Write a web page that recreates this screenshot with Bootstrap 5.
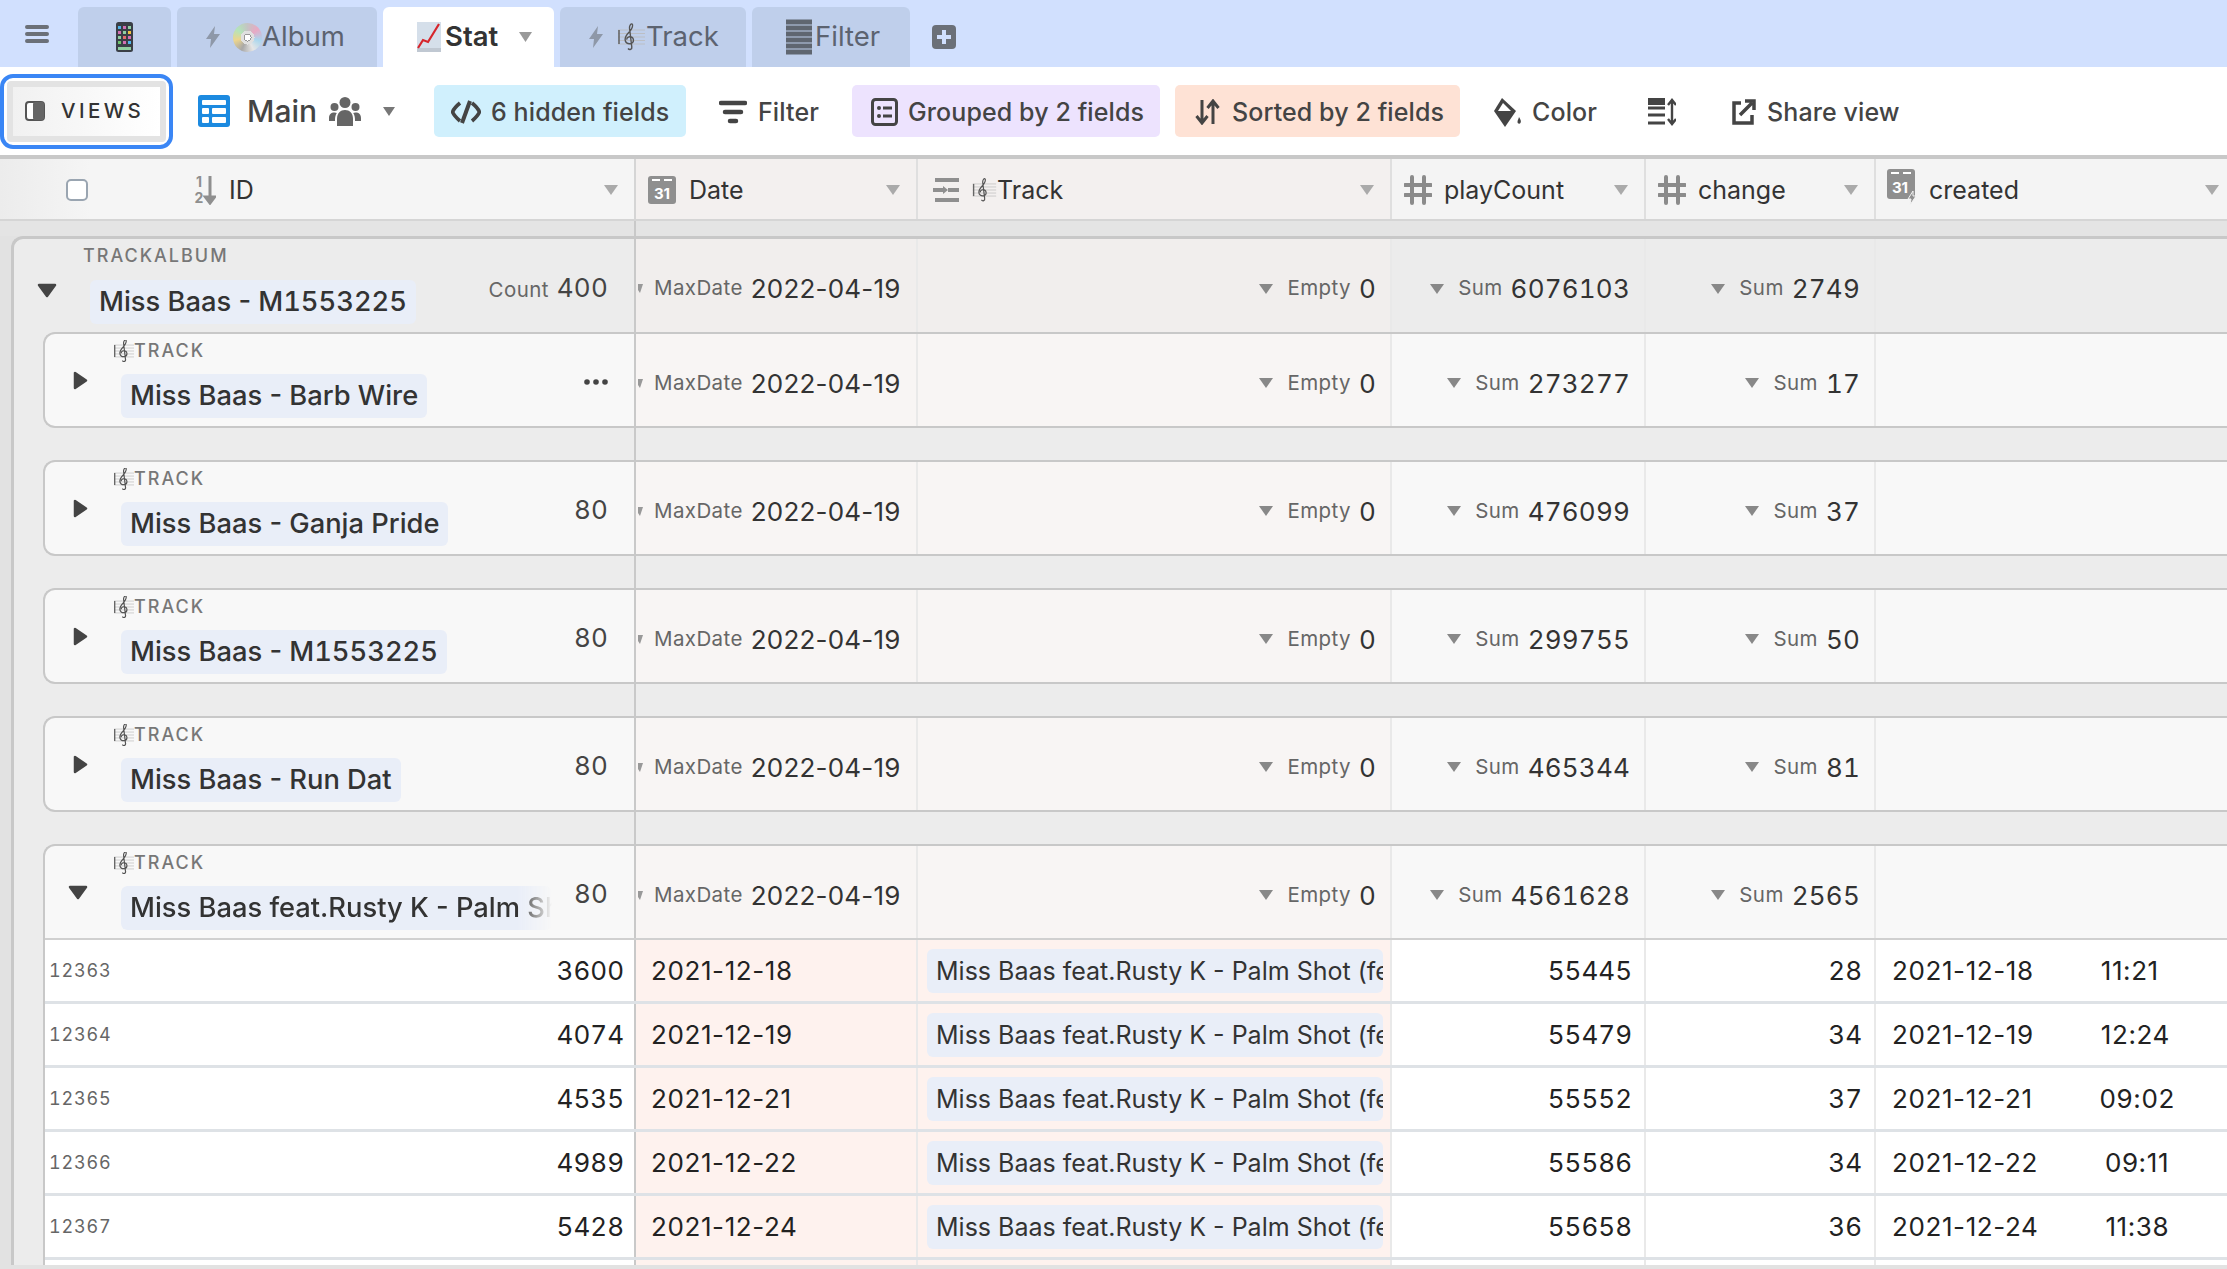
<!DOCTYPE html>
<html lang="en"><head><meta charset="utf-8"><title>Stat</title>
<link rel="stylesheet" href="https://cdn.jsdelivr.net/npm/bootstrap@5.3.0/dist/css/bootstrap.min.css">
<style>
html,body{height:100%;overflow:hidden;background:#e2e2e2;font-family:Inter,"Liberation Sans",sans-serif;color:#333}
.topbar{height:67px;background:#d1e0fe;padding-left:25px}
.burger{width:24px;margin-right:29px;color:#6b7078}
.tabx{height:60px;margin-top:7px;margin-right:6px;background:#bfcfeb;border-radius:6px 6px 0 0;color:#5c6370;font-size:27.5px;line-height:1}
.tabx svg{flex:none}
.tabx.on{background:#fff;color:#333;font-weight:600;margin-right:6px}
.t-phone{width:93px}.t-album{width:200px;padding-left:28px}.t-stat{width:171px;padding-left:34px}.t-track{width:186px;padding-left:28px}.t-filter{width:158px;padding-left:34px}
.plus{margin-left:16px;margin-top:7px;color:#6b7078}
.cdx{flex:none;width:29px;height:29px;border-radius:50%;background:radial-gradient(circle,#fff 0 3px,#999 3px 4px,#e0e0e0 4px 7px,transparent 7px),conic-gradient(#c4c4c4,#e9a9c4,#a9d6ee,#e6e6e6,#a8a8a8,#ecd58e,#b4e4ba,#c4c4c4);margin-left:12px}
.scorex{margin-left:12px}
.toolbar{height:88px;background:#fff;border-bottom:0}
.viewsx{width:173px;height:75px;border:4px solid #3a86f5;border-radius:13px;background:#fff;padding:3px;flex:none}
.viewsin{height:100%;border:6px solid #e3e3e3;border-radius:4px;background:linear-gradient(90deg,#f1f1f1,#fff);padding-left:12px;font-size:20.5px;font-weight:500;letter-spacing:3.4px;color:#333}
.mainx{margin-left:25px;font-size:30px;font-weight:500;color:#444;width:207px}
.toolx{height:52px;border:0;border-radius:5px;font-size:25px;font-weight:500;color:#444;padding:2px 0 0;line-height:1;letter-spacing:.1px}
.toolx:hover{color:#444}
.p-hid{width:252px;background:#d0f0fd;margin-left:29px;padding-left:17px}
.p-fil{width:166px;justify-content:center}
.p-grp{width:308px;background:#ede3fe;padding-left:19px}
.p-srt{width:285px;background:#fee2d5;margin-left:15px;padding-left:20px}
.p-col{margin-left:33px;width:155px}
.p-row{width:28px}
.p-shr{margin-left:55px}
.sheetx{border-top:4px solid #c8c8c8;height:1110px;overflow:hidden}
.cellx{flex:none;display:flex;align-items:center;overflow:hidden;height:100%;border-right:2px solid #e9e9e9;white-space:nowrap}
.c-i{width:636px;border-right:2px solid #c9c9c9}
.c-d{width:282px}.c-t{width:474px}.c-p{width:254px}.c-c{width:230px}.c-n{flex:1 0 0;border-right:0}
.hrow{height:62px;border-bottom:2px solid #d5d5d5;background:#f4f4f4;font-size:25px;color:#333;line-height:1}
.hrow .cellx{padding-top:2px;border-right-color:#dfdfdf}
.hrow .c-i{background:linear-gradient(90deg,#ececec,#f5f5f5 90px);padding-left:66px;border-right-color:#d5d5d5}
.hrow .c-d,.hrow .c-t{background:#f3f0ef}
.hrow .form-check-input{width:22px;height:22px;margin:0 106px 0 0;border:2px solid #9aa5b1;border-radius:5px;flex:none}
.careth{margin-left:auto;margin-right:16px;flex:none}
.bandx{height:15px;background:#e4e4e4}
.bandx .c-i{height:100%;background:#e4e4e4}
.albumx{margin-left:11px;border-left:3px solid #c8c8c8;border-top:3px solid #c8c8c8;border-top-left-radius:12px;background:#ececec}
.arow{height:93px}
.arow .c-i{width:622px}
.arow .c-d,.arow .c-t{background:#f1eeed}
.arow .cellx{padding-top:6px}
.arow .c-i{padding-top:0;border-right-color:#c9c9c9}
.trkx{margin-left:29px;border:2px solid #c8c8c8;border-width:2px 0 2px 2px;border-radius:12px 0 0 12px;background:#f8f8f8}
.trkx.openx{border-width:2px 0 0 2px;border-radius:12px 0 0 0}
.trow{height:92px}
.openx .trow{height:94px;border-bottom:2px solid #d0d0d0}
.trow .c-i{width:591px;border-right-color:#c9c9c9}
.trow .c-d,.trow .c-t{background:#f8f5f4}
.trow .cellx:not(.c-i){padding-top:6px}
.spacerx{height:32px}
.spacerx .c-i{width:622px;height:100%;background:transparent}
.tri{flex:none}
.blockx{flex:none;align-self:flex-start;min-width:0}
.lblx{height:22px;font-size:18px;font-weight:500;letter-spacing:2px;color:#777;line-height:22px;display:flex;align-items:center}
.pillx{display:inline-block;background:#e9eef8;border-radius:6px;height:44px;line-height:44px;padding:0 9px;margin-left:7px;font-size:27.3px;font-weight:500;color:#333;white-space:nowrap}
.fadex{width:431px;overflow:hidden;-webkit-mask-image:linear-gradient(90deg,#000 92%,transparent);mask-image:linear-gradient(90deg,#000 92%,transparent);vertical-align:top}
.a-blk{margin-left:26px;padding-top:6px}
.t-blk{margin-left:26px;padding-top:6px}
.t-blk .lblx{margin-bottom:12px}
.a-blk .lblx{margin-bottom:13px}
.countx{margin-left:auto;margin-right:26px;font-size:20.5px;color:#666;padding-top:3px;letter-spacing:.4px;flex:none}
.numx{font-size:26px;color:#444;margin-left:8px;letter-spacing:.2px}
.agg{justify-content:flex-end;font-size:20.5px;color:#666;letter-spacing:.4px;padding-right:14px}
.agg b{font-weight:400;font-size:26px;color:#333;margin-left:8px;letter-spacing:.2px}
.agg svg{margin-right:14px;flex:none}
.agl{justify-content:flex-start;padding-left:2px;padding-right:0}
.agl svg{margin-right:14px}
.rowx{height:64px;background:#fff;border-bottom:3px solid #dee2e6;font-size:26px;color:#222}
.rowx .c-i{width:591px;padding-left:4px;padding-right:10px;justify-content:space-between;border-right-color:#c9c9c9}
.rowx .c-d,.rowx .c-t{background:#fef2ee}
.idx{font-size:18px;color:#666;letter-spacing:.8px}
.rowx .c-d{padding-left:15px;letter-spacing:.6px}
.rowx .c-t{padding-left:9px}
.rowx .c-p,.rowx .c-c{justify-content:flex-end;padding-right:12px}
.rowx .c-n{padding-left:16px;letter-spacing:.6px}
.rowx .c-n span+span{margin-left:67px}
.recx{display:inline-block;background:#e9eef8;border-radius:6px;height:44px;line-height:44px;padding:0 9px;width:456px;font-size:25px;color:#333;white-space:nowrap;overflow:hidden}
.c-p b,.c-c b,.c-t b,.numx,.rowx .c-i,.rowx .c-p,.rowx .c-c,.digitsx{font-variant-numeric:tabular-nums}
</style></head><body>
<svg width="0" height="0" class="position-absolute"><defs>
<symbol id="score" viewBox="0 0 30 30"><path d="M2 8h27M2 11.500h27M2 15h27M2 18.500h27M2 22h27" stroke="#bbb" stroke-width=".8" fill="none"/><path d="M3 8v14" stroke="#666" stroke-width="1.600"/><path d="M12 26.500c1.500 1.800 4.200.8 3.800-1.500L13.500 6c-.2-2.500 1.500-4.500 2.600-4 1.200.7.200 4.500-2 7-2.500 2.800-5 5-5 8.500 0 3 2.500 4.500 5 4.200 2.500-.3 3.500-2.200 3.300-4-.2-2-2-3.200-3.800-3-2 .2-3 1.600-2.800 3" stroke="#555" stroke-width="1.400" fill="none"/></symbol>
<symbol id="bolt" viewBox="0 0 16 22"><path d="M10 0 1 13h5l-1 9 10-14H9z" fill="currentColor"/></symbol>
<symbol id="cal" viewBox="0 0 28 28"><rect width="28" height="28" rx="3" fill="#8f8f8f"/><path d="M4 4h8M16 4h8" stroke="#fff" stroke-width="2"/><text x="14" y="23" font-family="Inter,sans-serif" font-size="15" font-weight="700" fill="#fff" text-anchor="middle">31</text></symbol>
<symbol id="hash" viewBox="0 0 28 30"><path d="M8 2v26M20 2v26M1 10h26M1 20h26" stroke="#8b8b8b" stroke-width="4" stroke-linecap="round" fill="none"/></symbol>
</defs></svg>

<div class="topbar d-flex">
 <div class="burger d-flex align-items-center"><svg width="24" height="22" viewBox="0 0 24 22"><path d="M2 4h20M2 11h20M2 18h20" stroke="currentColor" stroke-width="4" stroke-linecap="round"/></svg></div>
 <div class="tabx t-phone d-flex align-items-center justify-content-center"><svg width="17" height="30" viewBox="0 0 17 30"><rect width="17" height="30" rx="2.500" fill="#3a3f46"/><g fill="#4fb5ea"><rect x="2" y="4" width="3" height="3"/><rect x="12" y="9" width="3" height="3" fill="#f0c040"/><rect x="7" y="14" width="3" height="3" fill="#e56a6a"/><rect x="2" y="19" width="3" height="3" fill="#6dc46d"/><rect x="12" y="19" width="3" height="3"/></g><g fill="#d26fb2"><rect x="7" y="4" width="3" height="3"/><rect x="2" y="9" width="3" height="3"/><rect x="12" y="14" width="3" height="3"/><rect x="7" y="19" width="3" height="3"/></g><g fill="#8fd0a0"><rect x="12" y="4" width="3" height="3"/><rect x="7" y="9" width="3" height="3"/><rect x="2" y="14" width="3" height="3"/><rect x="2" y="25" width="13" height="3"/></g></svg></div>
 <div class="tabx t-album d-flex align-items-center"><svg width="16" height="22" style="color:#8e98a8"><use href="#bolt"/></svg><div class="cdx"></div><span>Album</span></div>
 <div class="tabx on t-stat d-flex align-items-center"><svg width="24" height="30" viewBox="0 0 24 30"><rect width="24" height="30" fill="#d5dfea"/><rect y="26" width="24" height="4" fill="#c0c8d2"/><path d="M1 26l5-8 5 2L22 2" stroke="#d6262c" stroke-width="2.200" fill="none"/></svg><span class="ms-1">Stat</span><svg class="ms-auto" width="13" height="10" viewBox="0 0 13 10" style="margin-right:22px"><path d="M0 0h13L6.500 10z" fill="#999"/></svg></div>
 <div class="tabx t-track d-flex align-items-center"><svg width="16" height="22" style="color:#8e98a8"><use href="#bolt"/></svg><svg width="30" height="30" class="scorex"><use href="#score"/></svg><span>Track</span></div>
 <div class="tabx t-filter d-flex align-items-center"><svg width="26" height="36" viewBox="0 0 26 36" style="margin-right:3px"><path d="M0 3h26M0 9h26M0 15h26M0 21h26M0 27h26M0 33h26" stroke="#5f6670" stroke-width="5"/></svg><span>Filter</span></div>
 <div class="plus d-flex align-items-center"><svg width="24" height="24" viewBox="0 0 24 24"><rect width="24" height="24" rx="4" fill="currentColor"/><path d="M12 5v14M5 12h14" stroke="#d1e0fe" stroke-width="4"/></svg></div>
</div>

<div class="toolbar d-flex align-items-center">
 <div class="viewsx"><div class="viewsin d-flex align-items-center"><svg width="20" height="20" viewBox="0 0 20 20" style="margin-right:16px"><rect x="1" y="1" width="18" height="18" rx="3" fill="#fff" stroke="#555" stroke-width="2"/><rect x="8" y="1" width="11" height="18" rx="2" fill="#666"/></svg>VIEWS</div></div>
 <div class="mainx d-flex align-items-center"><svg width="32" height="32" viewBox="0 0 32 32"><rect width="32" height="32" rx="3" fill="#1c8ae0"/><g fill="#fff"><rect x="4" y="5" width="24" height="5" rx="1"/><rect x="4" y="13" width="7" height="6" rx="1"/><rect x="14" y="13" width="14" height="6" rx="1"/><rect x="4" y="22" width="7" height="6" rx="1"/><rect x="14" y="22" width="14" height="6" rx="1"/></g></svg>
  <span style="margin-left:17px;width:82px">Main</span><svg width="32" height="29" viewBox="0 0 32 29"><g fill="#666"><circle cx="16" cy="5.500" r="5.500"/><circle cx="5.500" cy="10" r="4"/><circle cx="26.500" cy="10" r="4"/><path d="M8 29v-7c0-6 3.500-9 8-9s8 3 8 9v7z"/><path d="M0 24v-3c0-3.500 2-5.500 5.500-5.500 1 0 1.800.2 2.300.5C6.500 18 6 20 6 23v1zM32 24v-3c0-3.500-2-5.500-5.500-5.500-1 0-1.800.2-2.300.5 1.300 2 1.800 4 1.800 7v1z"/></g></svg><svg width="12" height="9" viewBox="0 0 12 9" style="margin-left:22px"><path d="M0 0h12L6 9z" fill="#777"/></svg></div>
 <button class="btn toolx p-hid d-flex align-items-center"><svg width="30" height="24" viewBox="0 0 30 24" style="margin-right:10px"><path d="M9 3Q3 8 1.500 12 3 16 9 21M21 3q6 5 7.500 9-1.500 4-7.500 9" stroke="#444" stroke-width="3.600" fill="none"/><path d="M19 1 11 23" stroke="#444" stroke-width="4"/></svg>6 hidden fields</button>
 <button class="btn toolx p-fil d-flex align-items-center"><svg width="28" height="24" viewBox="0 0 28 24" style="margin-right:11px"><path d="M2 3h24M6 12h16M11 21h6" stroke="#444" stroke-width="4.500" stroke-linecap="round"/></svg>Filter</button>
 <button class="btn toolx p-grp d-flex align-items-center"><svg width="27" height="28" viewBox="0 0 27 28" style="margin-right:10px"><rect x="1.500" y="1.500" width="24" height="25" rx="3" fill="none" stroke="#444" stroke-width="3"/><circle cx="8" cy="10" r="2" fill="#444"/><circle cx="8" cy="18" r="2" fill="#444"/><path d="M12 10h9M12 18h9" stroke="#444" stroke-width="3"/></svg>Grouped by 2 fields</button>
 <button class="btn toolx p-srt d-flex align-items-center"><svg width="25" height="26" viewBox="0 0 25 26" style="margin-right:12px"><path d="M7 1v22M1.500 17 7 24l5.500-7M18 25V3M12.500 9 18 2l5.500 7" stroke="#444" stroke-width="3" fill="none"/></svg>Sorted by 2 fields</button>
 <button class="btn toolx p-col d-flex align-items-center"><svg width="29" height="31" viewBox="0 0 29 31" style="margin-right:10px"><path d="M9 1 1 14l11 16 11-16z" fill="#444"/><path d="M10 6l-5 8h13z" fill="#fff"/><path d="M26 20c1.500 2.500 2.500 4 1.500 6-1 1.200-3 .6-3-1 0-1.500 1-3 1.500-5z" fill="#444"/></svg>Color</button>
 <button class="btn toolx p-row d-flex align-items-center"><svg width="28" height="28" viewBox="0 0 28 28"><path d="M0 3h17M0 10h17M0 17h17M0 25h17" stroke="#444" stroke-width="3"/><rect y="0" width="17" height="7" fill="#444"/><path d="M24 3v22M20 7l4-5 4 5M20 21l4 5 4-5" stroke="#444" stroke-width="2.400" fill="none"/></svg></button>
 <button class="btn toolx p-shr d-flex align-items-center"><svg width="25" height="26" viewBox="0 0 25 26" style="margin-right:11px"><path d="M10 4H3v20h18v-8" stroke="#444" stroke-width="3.500" fill="none"/><path d="M9 16 21 4M14 2h9v9" stroke="#444" stroke-width="3.500" fill="none"/></svg>Share view</button>
</div>

<div class="sheetx">
 <div class="hrow d-flex">
  <div class="cellx c-i"><input class="form-check-input" type="checkbox" aria-label="select all"><svg width="22" height="30" viewBox="0 0 22 30" style="margin-right:13px"><text x="5" y="12" font-family="Inter,sans-serif" font-size="14" font-weight="700" fill="#8f8f8f" text-anchor="middle">1</text><text x="5" y="28" font-family="Inter,sans-serif" font-size="14" font-weight="700" fill="#8f8f8f" text-anchor="middle">2</text><path d="M16 1v25M11.500 22l4.500 6 4.500-6z" stroke="#8f8f8f" stroke-width="3" fill="#8f8f8f"/></svg>ID<svg class="careth" width="14" height="10" viewBox="0 0 14 10"><path d="M0 0h14L7 10z" fill="#aaa"/></svg></div>
  <div class="cellx c-d"><svg width="28" height="28" style="margin:0 13px 0 12px"><use href="#cal"/></svg>Date<svg class="careth" width="14" height="10" viewBox="0 0 14 10"><path d="M0 0h14L7 10z" fill="#aaa"/></svg></div>
  <div class="cellx c-t"><svg width="30" height="26" viewBox="0 0 30 26" style="margin:0 10px 0 13px"><path d="M4 3h24M2 13h11M17 13h11M4 23h24" stroke="#8f8f8f" stroke-width="4"/><path d="M12 9l5 4-5 4z" fill="#8f8f8f"/></svg><svg width="26" height="30" viewBox="0 0 28 30"><use href="#score"/></svg>Track<svg class="careth" width="14" height="10" viewBox="0 0 14 10"><path d="M0 0h14L7 10z" fill="#aaa"/></svg></div>
  <div class="cellx c-p"><svg width="28" height="30" style="margin:0 12px 0 12px"><use href="#hash"/></svg>playCount<svg class="careth" width="14" height="10" viewBox="0 0 14 10"><path d="M0 0h14L7 10z" fill="#aaa"/></svg></div>
  <div class="cellx c-c"><svg width="28" height="30" style="margin:0 12px 0 12px"><use href="#hash"/></svg>change<svg class="careth" width="14" height="10" viewBox="0 0 14 10"><path d="M0 0h14L7 10z" fill="#aaa"/></svg></div>
  <div class="cellx c-n"><svg width="30" height="36" viewBox="0 0 30 36" style="margin:-6px 12px 0 11px"><rect width="28" height="30" rx="3" fill="#8f8f8f"/><path d="M4 4h8M16 4h8" stroke="#fff" stroke-width="2"/><text x="13" y="24" font-family="Inter,sans-serif" font-size="15" font-weight="700" fill="#fff" text-anchor="middle">31</text><path d="M26 22l-5 8h3l-1 6 6-9h-3z" fill="#8f8f8f" stroke="#f4f4f4"/></svg>created<svg class="careth" style="margin-right:8px" width="14" height="10" viewBox="0 0 14 10"><path d="M0 0h14L7 10z" fill="#aaa"/></svg></div>
 </div>
 <div class="bandx d-flex"><div class="cellx c-i"></div></div>
 <div class="albumx">
  <div class="arow d-flex">
   <div class="cellx c-i"><svg class="tri" width="20" height="15" viewBox="0 0 20 15" style="margin:9px 0 0 23px"><path d="M2 2h16l-8 11z" fill="#444" stroke="#444" stroke-width="2.500" stroke-linejoin="round"/></svg><div class="blockx a-blk"><div class="lblx">TRACKALBUM</div><span class="pillx">Miss Baas - M<span class="digitsx">1553225</span></span></div><div class="countx">Count<span class="numx">400</span></div></div>
   <div class="cellx c-d agg agl"><svg width="5" height="9" viewBox="0 0 5 9" style="margin-right:11px"><path d="M0 0h5L2 9 0 6z" fill="#999"/></svg>MaxDate<b>2022-04-19</b></div>
   <div class="cellx c-t agg"><svg width="14" height="10" viewBox="0 0 14 10"><path d="M0 0h14L7 10z" fill="#888"/></svg>Empty<b>0</b></div>
   <div class="cellx c-p agg"><svg width="14" height="10" viewBox="0 0 14 10"><path d="M0 0h14L7 10z" fill="#888"/></svg>Sum<b>6076103</b></div>
   <div class="cellx c-c agg"><svg width="14" height="10" viewBox="0 0 14 10"><path d="M0 0h14L7 10z" fill="#888"/></svg>Sum<b>2749</b></div>
   <div class="cellx c-n"></div>
  </div>

  <div class="trkx"><div class="trow d-flex">
   <div class="cellx c-i"><svg class="tri" width="15" height="19" viewBox="0 0 15 19" style="margin:0 0 0 28px"><path d="M2 2v15l11-7.500z" fill="#444" stroke="#444" stroke-width="2.500" stroke-linejoin="round"/></svg><div class="blockx t-blk"><div class="lblx"><svg width="20" height="22" viewBox="3 2 22 26"><use href="#score" width="30" height="30"/></svg>TRACK</div><span class="pillx">Miss Baas - Barb Wire</span></div><div class="countx d-flex"><svg width="24" height="6" viewBox="0 0 24 6"><g fill="#444"><circle cx="3" cy="3" r="2.800"/><circle cx="12" cy="3" r="2.800"/><circle cx="21" cy="3" r="2.800"/></g></svg></div></div>
   <div class="cellx c-d agg agl"><svg width="5" height="9" viewBox="0 0 5 9" style="margin-right:11px"><path d="M0 0h5L2 9 0 6z" fill="#999"/></svg>MaxDate<b>2022-04-19</b></div>
   <div class="cellx c-t agg"><svg width="14" height="10" viewBox="0 0 14 10"><path d="M0 0h14L7 10z" fill="#888"/></svg>Empty<b>0</b></div>
   <div class="cellx c-p agg"><svg width="14" height="10" viewBox="0 0 14 10"><path d="M0 0h14L7 10z" fill="#888"/></svg>Sum<b>273277</b></div>
   <div class="cellx c-c agg"><svg width="14" height="10" viewBox="0 0 14 10"><path d="M0 0h14L7 10z" fill="#888"/></svg>Sum<b>17</b></div>
   <div class="cellx c-n"></div>
  </div></div>
  <div class="spacerx d-flex"><div class="cellx c-i"></div></div>

  <div class="trkx"><div class="trow d-flex">
   <div class="cellx c-i"><svg class="tri" width="15" height="19" viewBox="0 0 15 19" style="margin:0 0 0 28px"><path d="M2 2v15l11-7.500z" fill="#444" stroke="#444" stroke-width="2.500" stroke-linejoin="round"/></svg><div class="blockx t-blk"><div class="lblx"><svg width="20" height="22" viewBox="3 2 22 26"><use href="#score" width="30" height="30"/></svg>TRACK</div><span class="pillx">Miss Baas - Ganja Pride</span></div><div class="countx"><span class="numx">80</span></div></div>
   <div class="cellx c-d agg agl"><svg width="5" height="9" viewBox="0 0 5 9" style="margin-right:11px"><path d="M0 0h5L2 9 0 6z" fill="#999"/></svg>MaxDate<b>2022-04-19</b></div>
   <div class="cellx c-t agg"><svg width="14" height="10" viewBox="0 0 14 10"><path d="M0 0h14L7 10z" fill="#888"/></svg>Empty<b>0</b></div>
   <div class="cellx c-p agg"><svg width="14" height="10" viewBox="0 0 14 10"><path d="M0 0h14L7 10z" fill="#888"/></svg>Sum<b>476099</b></div>
   <div class="cellx c-c agg"><svg width="14" height="10" viewBox="0 0 14 10"><path d="M0 0h14L7 10z" fill="#888"/></svg>Sum<b>37</b></div>
   <div class="cellx c-n"></div>
  </div></div>
  <div class="spacerx d-flex"><div class="cellx c-i"></div></div>

  <div class="trkx"><div class="trow d-flex">
   <div class="cellx c-i"><svg class="tri" width="15" height="19" viewBox="0 0 15 19" style="margin:0 0 0 28px"><path d="M2 2v15l11-7.500z" fill="#444" stroke="#444" stroke-width="2.500" stroke-linejoin="round"/></svg><div class="blockx t-blk"><div class="lblx"><svg width="20" height="22" viewBox="3 2 22 26"><use href="#score" width="30" height="30"/></svg>TRACK</div><span class="pillx">Miss Baas - M<span class="digitsx">1553225</span></span></div><div class="countx"><span class="numx">80</span></div></div>
   <div class="cellx c-d agg agl"><svg width="5" height="9" viewBox="0 0 5 9" style="margin-right:11px"><path d="M0 0h5L2 9 0 6z" fill="#999"/></svg>MaxDate<b>2022-04-19</b></div>
   <div class="cellx c-t agg"><svg width="14" height="10" viewBox="0 0 14 10"><path d="M0 0h14L7 10z" fill="#888"/></svg>Empty<b>0</b></div>
   <div class="cellx c-p agg"><svg width="14" height="10" viewBox="0 0 14 10"><path d="M0 0h14L7 10z" fill="#888"/></svg>Sum<b>299755</b></div>
   <div class="cellx c-c agg"><svg width="14" height="10" viewBox="0 0 14 10"><path d="M0 0h14L7 10z" fill="#888"/></svg>Sum<b>50</b></div>
   <div class="cellx c-n"></div>
  </div></div>
  <div class="spacerx d-flex"><div class="cellx c-i"></div></div>

  <div class="trkx"><div class="trow d-flex">
   <div class="cellx c-i"><svg class="tri" width="15" height="19" viewBox="0 0 15 19" style="margin:0 0 0 28px"><path d="M2 2v15l11-7.500z" fill="#444" stroke="#444" stroke-width="2.500" stroke-linejoin="round"/></svg><div class="blockx t-blk"><div class="lblx"><svg width="20" height="22" viewBox="3 2 22 26"><use href="#score" width="30" height="30"/></svg>TRACK</div><span class="pillx">Miss Baas - Run Dat</span></div><div class="countx"><span class="numx">80</span></div></div>
   <div class="cellx c-d agg agl"><svg width="5" height="9" viewBox="0 0 5 9" style="margin-right:11px"><path d="M0 0h5L2 9 0 6z" fill="#999"/></svg>MaxDate<b>2022-04-19</b></div>
   <div class="cellx c-t agg"><svg width="14" height="10" viewBox="0 0 14 10"><path d="M0 0h14L7 10z" fill="#888"/></svg>Empty<b>0</b></div>
   <div class="cellx c-p agg"><svg width="14" height="10" viewBox="0 0 14 10"><path d="M0 0h14L7 10z" fill="#888"/></svg>Sum<b>465344</b></div>
   <div class="cellx c-c agg"><svg width="14" height="10" viewBox="0 0 14 10"><path d="M0 0h14L7 10z" fill="#888"/></svg>Sum<b>81</b></div>
   <div class="cellx c-n"></div>
  </div></div>
  <div class="spacerx d-flex"><div class="cellx c-i"></div></div>

  <div class="trkx openx"><div class="trow d-flex">
   <div class="cellx c-i"><svg class="tri" width="20" height="15" viewBox="0 0 20 15" style="margin:0 0 0 23px"><path d="M2 2h16l-8 11z" fill="#444" stroke="#444" stroke-width="2.500" stroke-linejoin="round"/></svg><div class="blockx t-blk"><div class="lblx"><svg width="20" height="22" viewBox="3 2 22 26"><use href="#score" width="30" height="30"/></svg>TRACK</div><span class="pillx fadex">Miss Baas feat.Rusty K - Palm Shot (feat.Rusty K)</span></div><div class="countx"><span class="numx">80</span></div></div>
   <div class="cellx c-d agg agl"><svg width="5" height="9" viewBox="0 0 5 9" style="margin-right:11px"><path d="M0 0h5L2 9 0 6z" fill="#999"/></svg>MaxDate<b>2022-04-19</b></div>
   <div class="cellx c-t agg"><svg width="14" height="10" viewBox="0 0 14 10"><path d="M0 0h14L7 10z" fill="#888"/></svg>Empty<b>0</b></div>
   <div class="cellx c-p agg"><svg width="14" height="10" viewBox="0 0 14 10"><path d="M0 0h14L7 10z" fill="#888"/></svg>Sum<b>4561628</b></div>
   <div class="cellx c-c agg"><svg width="14" height="10" viewBox="0 0 14 10"><path d="M0 0h14L7 10z" fill="#888"/></svg>Sum<b>2565</b></div>
   <div class="cellx c-n"></div>
  </div>
  <div class="rowx d-flex"><div class="cellx c-i"><span class="idx">12363</span><span>3600</span></div><div class="cellx c-d">2021-12-18</div><div class="cellx c-t"><span class="recx">Miss Baas feat.Rusty K - Palm Shot (feat.Rusty K)</span></div><div class="cellx c-p">55445</div><div class="cellx c-c">28</div><div class="cellx c-n"><span>2021-12-18</span><span>11:21</span></div></div>
  <div class="rowx d-flex"><div class="cellx c-i"><span class="idx">12364</span><span>4074</span></div><div class="cellx c-d">2021-12-19</div><div class="cellx c-t"><span class="recx">Miss Baas feat.Rusty K - Palm Shot (feat.Rusty K)</span></div><div class="cellx c-p">55479</div><div class="cellx c-c">34</div><div class="cellx c-n"><span>2021-12-19</span><span>12:24</span></div></div>
  <div class="rowx d-flex"><div class="cellx c-i"><span class="idx">12365</span><span>4535</span></div><div class="cellx c-d">2021-12-21</div><div class="cellx c-t"><span class="recx">Miss Baas feat.Rusty K - Palm Shot (feat.Rusty K)</span></div><div class="cellx c-p">55552</div><div class="cellx c-c">37</div><div class="cellx c-n"><span>2021-12-21</span><span>09:02</span></div></div>
  <div class="rowx d-flex"><div class="cellx c-i"><span class="idx">12366</span><span>4989</span></div><div class="cellx c-d">2021-12-22</div><div class="cellx c-t"><span class="recx">Miss Baas feat.Rusty K - Palm Shot (feat.Rusty K)</span></div><div class="cellx c-p">55586</div><div class="cellx c-c">34</div><div class="cellx c-n"><span>2021-12-22</span><span>09:11</span></div></div>
  <div class="rowx d-flex"><div class="cellx c-i"><span class="idx">12367</span><span>5428</span></div><div class="cellx c-d">2021-12-24</div><div class="cellx c-t"><span class="recx">Miss Baas feat.Rusty K - Palm Shot (feat.Rusty K)</span></div><div class="cellx c-p">55658</div><div class="cellx c-c">36</div><div class="cellx c-n"><span>2021-12-24</span><span>11:38</span></div></div>
  <div class="rowx d-flex"><div class="cellx c-i"></div><div class="cellx c-d"></div><div class="cellx c-t"></div><div class="cellx c-p"></div><div class="cellx c-c"></div><div class="cellx c-n"></div></div>
  </div>
 </div>
</div>
</body></html>
